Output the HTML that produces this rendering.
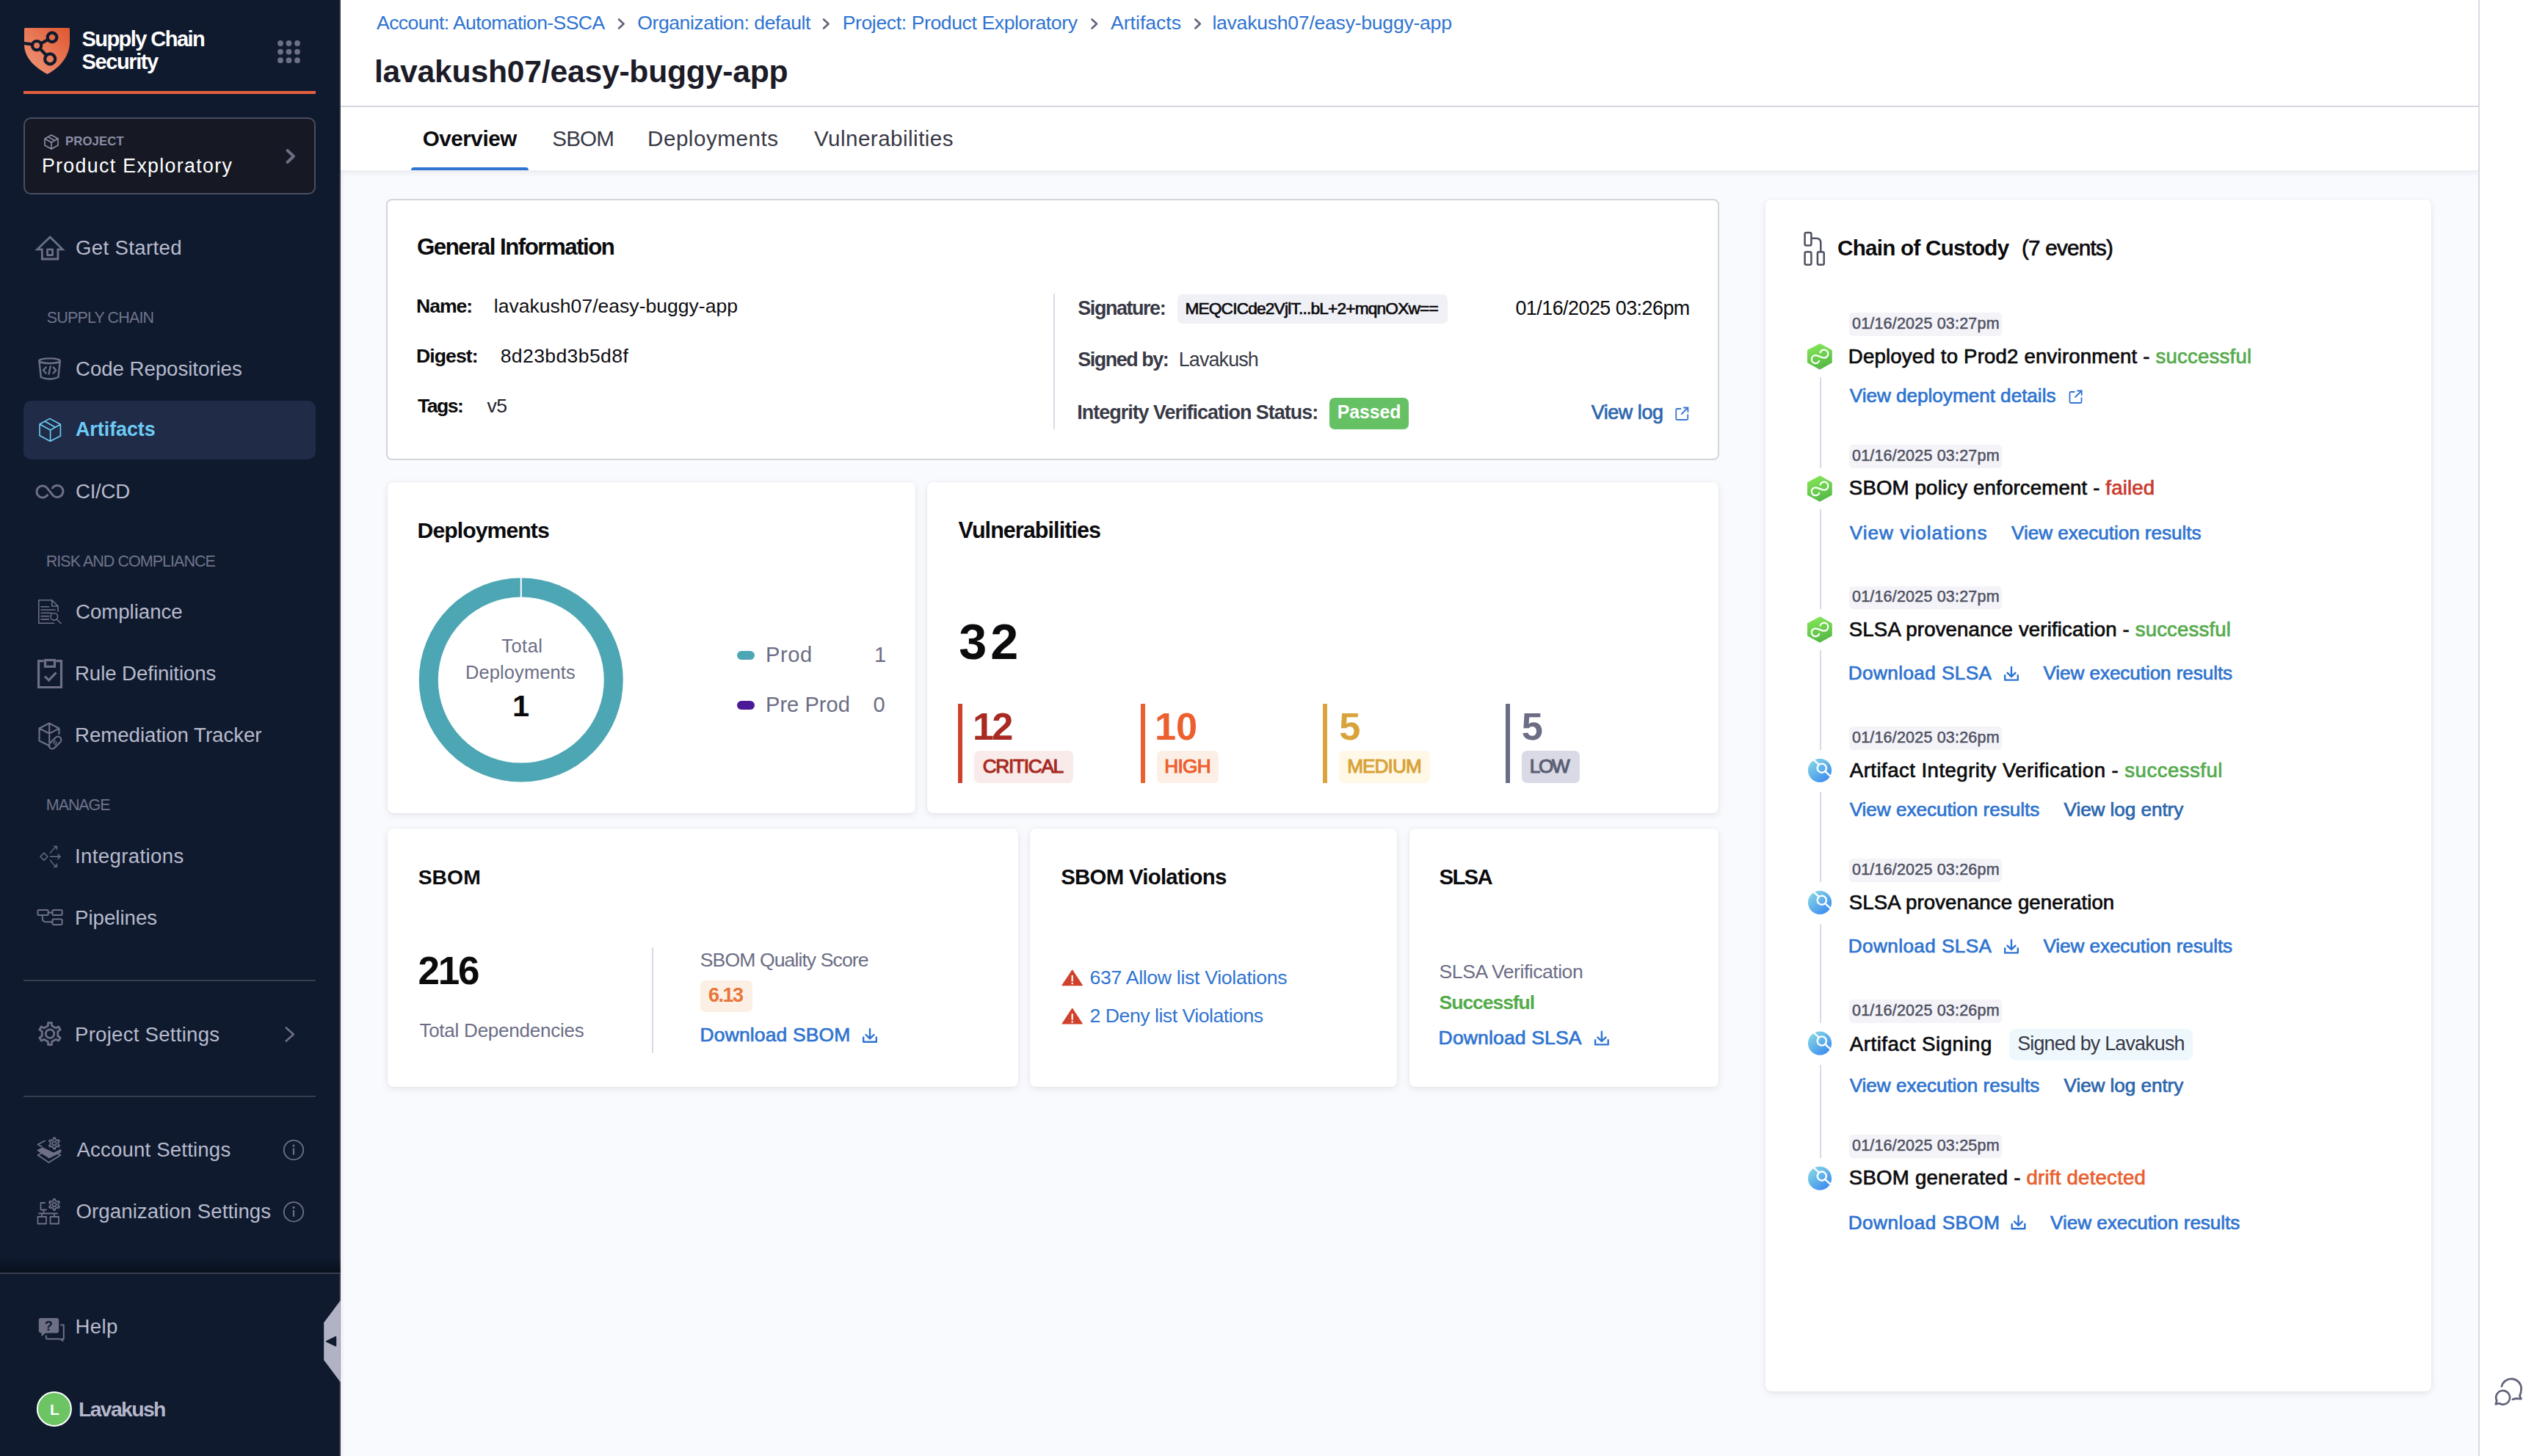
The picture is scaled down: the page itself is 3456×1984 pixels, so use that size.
<!DOCTYPE html>
<html><head><meta charset="utf-8"><title>lavakush07/easy-buggy-app</title>
<style>
html,body{margin:0;padding:0}
body{width:3456px;height:1984px;position:relative;overflow:hidden;background:#f9fafd;font-family:"Liberation Sans",sans-serif}
.t{position:absolute;white-space:nowrap}
</style></head><body>
<div style="position:absolute;left:0.00px;top:0.00px;width:464.00px;height:1984.00px;background:#0f1a2e"></div><div style="position:absolute;left:462.00px;top:0.00px;width:2.00px;height:1984.00px;background:#31333f"></div><div style="position:absolute;left:464.00px;top:0.00px;width:6.00px;height:1984.00px;background:linear-gradient(to right, rgba(40,41,61,0.05), rgba(40,41,61,0))"></div><div style="position:absolute;left:32.00px;top:124.00px;width:398.00px;height:4.00px;background:#e4603f"></div><div style="position:absolute;left:32.00px;top:160.00px;width:398.00px;height:105.00px;background:#161924;border:2px solid #4a4e62;border-radius:10px;box-sizing:border-box"></div><div style="position:absolute;left:32.00px;top:546.00px;width:398.00px;height:80.00px;background:#1f2b47;border-radius:10px"></div><div style="position:absolute;left:32.00px;top:1335.00px;width:398.00px;height:2.00px;background:#383d50"></div><div style="position:absolute;left:32.00px;top:1493.00px;width:398.00px;height:2.00px;background:#383d50"></div><div style="position:absolute;left:0.00px;top:1714.00px;width:464.00px;height:20.00px;background:linear-gradient(to bottom, rgba(5,8,16,0) 0%, rgba(5,8,16,0.6) 100%)"></div><div style="position:absolute;left:0.00px;top:1734.00px;width:464.00px;height:2.00px;background:#3b3f52"></div><div style="position:absolute;left:464.00px;top:0.00px;width:2913.00px;height:145.00px;background:#ffffff"></div><div style="position:absolute;left:464.00px;top:144.00px;width:2913.00px;height:2.00px;background:#d9dae5"></div><div style="position:absolute;left:464.00px;top:146.00px;width:2913.00px;height:86.00px;background:#ffffff;box-shadow:0 3px 8px rgba(40,41,61,0.08)"></div><div style="position:absolute;left:560.00px;top:228.00px;width:159.50px;height:4.00px;background:#2f74d0;border-radius:4px 4px 0 0"></div><div style="position:absolute;left:3376.00px;top:0.00px;width:2.00px;height:1984.00px;background:#d9dae5"></div><div style="position:absolute;left:3378.00px;top:0.00px;width:78.00px;height:1984.00px;background:#ffffff"></div><div style="position:absolute;left:526.00px;top:271.00px;width:1816.00px;height:356.00px;background:#fff;border:2px solid #d4d5db;border-radius:8px;box-sizing:border-box"></div><div style="position:absolute;left:528.00px;top:657.00px;width:719.00px;height:451.00px;background:#fff;border-radius:8px;box-shadow:0 0 3px rgba(40,41,61,0.06),0 3px 10px rgba(96,97,112,0.12)"></div><div style="position:absolute;left:1263.00px;top:657.00px;width:1078.00px;height:451.00px;background:#fff;border-radius:8px;box-shadow:0 0 3px rgba(40,41,61,0.06),0 3px 10px rgba(96,97,112,0.12)"></div><div style="position:absolute;left:528.00px;top:1129.00px;width:859.00px;height:352.00px;background:#fff;border-radius:8px;box-shadow:0 0 3px rgba(40,41,61,0.06),0 3px 10px rgba(96,97,112,0.12)"></div><div style="position:absolute;left:1403.00px;top:1129.00px;width:500.00px;height:352.00px;background:#fff;border-radius:8px;box-shadow:0 0 3px rgba(40,41,61,0.06),0 3px 10px rgba(96,97,112,0.12)"></div><div style="position:absolute;left:1919.50px;top:1129.00px;width:421.50px;height:352.00px;background:#fff;border-radius:8px;box-shadow:0 0 3px rgba(40,41,61,0.06),0 3px 10px rgba(96,97,112,0.12)"></div><div style="position:absolute;left:2405.00px;top:272.00px;width:907.00px;height:1624.00px;background:#fff;border-radius:8px;box-shadow:0 0 3px rgba(40,41,61,0.06),0 3px 10px rgba(96,97,112,0.12)"></div><div style="position:absolute;left:1435.00px;top:400.00px;width:2.00px;height:185.00px;background:#d9dae5"></div><div style="position:absolute;left:1604.00px;top:401.00px;width:368.00px;height:40.00px;background:#f0f0f7;border-radius:7px"></div><div style="position:absolute;left:1811.00px;top:542.00px;width:108.00px;height:43.00px;background:#66c164;border-radius:7px"></div><div style="position:absolute;left:1304.70px;top:959.40px;width:6.00px;height:107.20px;background:#d0402a"></div><div style="position:absolute;left:1327.40px;top:1023.30px;width:134.40px;height:43.30px;background:#f9ebea;border-radius:7px"></div><div style="position:absolute;left:1554.00px;top:959.40px;width:6.00px;height:107.20px;background:#ec5f2f"></div><div style="position:absolute;left:1576.00px;top:1023.30px;width:83.50px;height:43.30px;background:#fcefe6;border-radius:7px"></div><div style="position:absolute;left:1802.00px;top:959.40px;width:6.00px;height:107.20px;background:#d9a43a"></div><div style="position:absolute;left:1824.00px;top:1023.30px;width:123.80px;height:43.30px;background:#fff8e6;border-radius:7px"></div><div style="position:absolute;left:2050.70px;top:959.40px;width:6.00px;height:107.20px;background:#6b6d85"></div><div style="position:absolute;left:2073.00px;top:1023.30px;width:78.70px;height:43.30px;background:#d9dae5;border-radius:7px"></div><div style="position:absolute;left:888.00px;top:1291.00px;width:2.00px;height:143.50px;background:#d9dae5"></div><div style="position:absolute;left:954.00px;top:1335.60px;width:70.60px;height:43.40px;background:#fcefe3;border-radius:7px"></div><div style="position:absolute;left:1003.80px;top:886.70px;width:24.50px;height:12.50px;background:#4da6b4;border-radius:7px"></div><div style="position:absolute;left:1003.80px;top:954.70px;width:24.50px;height:12.50px;background:#4b1a96;border-radius:7px"></div><div style="position:absolute;left:2519.00px;top:426.20px;width:208.00px;height:31.60px;background:#f3f3f8;border-radius:5px"></div><div style="position:absolute;left:2519.00px;top:606.10px;width:208.00px;height:31.60px;background:#f3f3f8;border-radius:5px"></div><div style="position:absolute;left:2519.00px;top:798.50px;width:208.00px;height:31.60px;background:#f3f3f8;border-radius:5px"></div><div style="position:absolute;left:2519.00px;top:990.20px;width:208.00px;height:31.60px;background:#f3f3f8;border-radius:5px"></div><div style="position:absolute;left:2519.00px;top:1170.20px;width:208.00px;height:31.60px;background:#f3f3f8;border-radius:5px"></div><div style="position:absolute;left:2519.00px;top:1362.00px;width:208.00px;height:31.60px;background:#f3f3f8;border-radius:5px"></div><div style="position:absolute;left:2519.00px;top:1546.00px;width:208.00px;height:31.60px;background:#f3f3f8;border-radius:5px"></div><div style="position:absolute;left:2737.30px;top:1402.40px;width:249.50px;height:42.80px;background:#eef8fc;border-radius:9px"></div><div style="position:absolute;left:2479.00px;top:513.60px;width:2.00px;height:124.10px;background:#d9dae5"></div><div style="position:absolute;left:2479.00px;top:693.70px;width:2.00px;height:136.40px;background:#d9dae5"></div><div style="position:absolute;left:2479.00px;top:885.70px;width:2.00px;height:136.10px;background:#d9dae5"></div><div style="position:absolute;left:2479.00px;top:1079.10px;width:2.00px;height:122.70px;background:#d9dae5"></div><div style="position:absolute;left:2479.00px;top:1259.10px;width:2.00px;height:134.50px;background:#d9dae5"></div><div style="position:absolute;left:2479.00px;top:1450.90px;width:2.00px;height:126.70px;background:#d9dae5"></div>
<svg width="3456" height="1984" viewBox="0 0 3456 1984" style="position:absolute;left:0;top:0;pointer-events:none"><defs>
<linearGradient id="lg" x1="0" y1="1" x2="1" y2="0"><stop offset="0" stop-color="#f09a7e"/><stop offset="1" stop-color="#e0572f"/></linearGradient>
<linearGradient id="gg" x1="0" y1="0" x2="0.3" y2="1"><stop offset="0" stop-color="#88e957"/><stop offset="1" stop-color="#58bb48"/></linearGradient>
<linearGradient id="bg" x1="0.15" y1="0.1" x2="0.85" y2="0.95"><stop offset="0" stop-color="#84d4e6"/><stop offset="1" stop-color="#3a8af0"/></linearGradient>
</defs><path d="M33,39.5 Q33,38 34.5,38 L93.5,38 Q95,38 95,39.5 L95,57.5 C95,76 82,92 64.4,101 C47,92 33,78 33,60.8 Z" fill="url(#lg)"/><g fill="none" stroke="#0f1a2e" stroke-width="4.2"><circle cx="50.1" cy="62.1" r="6.1"/><circle cx="71" cy="50.9" r="6.3"/><circle cx="68.2" cy="80.4" r="7"/><path d="M28,58.5 L44.2,60.3 M55.6,59.3 L65.3,54 M54.6,66.4 L63,75.3"/></g><circle cx="382" cy="59" r="3.9" fill="#6d6f87"/><circle cx="382" cy="70.6" r="3.9" fill="#6d6f87"/><circle cx="382" cy="82.2" r="3.9" fill="#6d6f87"/><circle cx="393.5" cy="59" r="3.9" fill="#6d6f87"/><circle cx="393.5" cy="70.6" r="3.9" fill="#6d6f87"/><circle cx="393.5" cy="82.2" r="3.9" fill="#6d6f87"/><circle cx="405" cy="59" r="3.9" fill="#6d6f87"/><circle cx="405" cy="70.6" r="3.9" fill="#6d6f87"/><circle cx="405" cy="82.2" r="3.9" fill="#6d6f87"/><g fill="none" stroke="#8b8ea6" stroke-width="1.6" stroke-linejoin="round"><path d="M70,184 L79,189 V198 L70,203 L61,198 V189 Z M61,189 L70,194 L79,189 M70,194 V203 M65.5,186.5 L74.5,191.5"/></g><path d="M391.5,205 L400,213 L391.5,221" fill="none" stroke="#6d6f87" stroke-width="3.8" stroke-linecap="round" stroke-linejoin="round"/><g fill="none" stroke="#6d6f87" stroke-width="2.8" stroke-linejoin="round" stroke-linecap="round"><path d="M68.2,323 L50.8,339.8 H57.3 V353 H78.9 V339.8 H85.3 Z" stroke-linejoin="miter"/><rect x="64.5" y="339.8" width="7.1" height="7.8"/></g><g fill="none" stroke="#6d6f87" stroke-width="2.4" stroke-linejoin="round" stroke-linecap="round"><ellipse cx="67.6" cy="491.7" rx="14.2" ry="3.3"/><path d="M53.4,492 L55.8,514 Q67.6,519 79.4,514 L81.8,492"/><path d="M62.5,500.5 L59,504.5 L62.5,508.5 M72.7,500.5 L76.2,504.5 L72.7,508.5 M68.6,499.5 L66.6,509.5"/></g><g fill="none" stroke="#6ecbf5" stroke-width="1.6" stroke-linejoin="round" stroke-linecap="round"><path d="M67.8,570.4 L54,578 V593.5 L68.4,601.2 L82.4,594 V578.3 Z M54,578 L68.6,586 L82.4,578.3 M68.6,586 V601.2 M61.2,574.2 L75.4,582.2"/></g><g fill="none" stroke="#6d6f87" stroke-width="3.0" stroke-linejoin="round" stroke-linecap="round"><path d="M64.6,674.6 A8,8 0 1 1 63.6,664.4 L72.4,675.2 A8,8 0 1 0 71.4,665"/></g><g fill="none" stroke="#6d6f87" stroke-width="1.6" stroke-linejoin="round" stroke-linecap="round"><path d="M79,833 V826 L70.8,817.8 H52.8 V849.2 H73.5 M70.8,817.8 V826 H79 M56,826.8 H66.5 M56,831 H75 M56,835.3 H70 M56,839.6 H66.5 M56,843.9 H66.5"/><circle cx="73.8" cy="840.3" r="4.8"/><path d="M77.3,843.8 L83,849.5"/></g><g fill="none" stroke="#6d6f87" stroke-width="3.2" stroke-linejoin="round" stroke-linecap="round"><path d="M59.5,900.6 H52.6 V936.5 H83.5 V900.6 H76.4" stroke-linejoin="miter" stroke-linecap="butt"/><rect x="61.5" y="899.5" width="13" height="8.8" stroke-linejoin="miter"/><path d="M61,921.5 L66.4,927 L76.5,916.5" stroke-linecap="butt" stroke-linejoin="miter"/></g><g fill="none" stroke="#6d6f87" stroke-width="2.2" stroke-linejoin="round" stroke-linecap="round"><path d="M67,985.5 L53.5,992.5 V1009.5 L67.5,1016.3 M53.5,992.5 L67.2,999.6 L80.5,992.5 L67,985.5 M80.5,992.5 V1000 M67.2,987.5 V998.5 M67.2,1001.5 V1011.5"/><rect x="65" y="1007.5" width="20" height="9" rx="4.5" transform="rotate(-45 75 1012)"/><path d="M72.8,1012.6 l1,-1 M75,1014.6 l1,-1 M74,1010.4 l1,-1 M76.2,1012.4 l1,-1" stroke-width="1.5"/></g><g fill="none" stroke="#6d6f87" stroke-width="1.4" stroke-linejoin="round" stroke-linecap="round"><path d="M59.9,1162.2 L64.9,1167.2 L59.9,1172.2 L54.9,1167.2 Z M68.5,1167.2 H82 M79,1164.2 L82,1167.2 L79,1170.2 M68.5,1162.5 Q72,1156.5 77.5,1153.5 M73.6,1153.2 L77.5,1153.5 L77.3,1157.4 M68.5,1172 Q72,1178 77.5,1181 M77.3,1177.1 L77.5,1181 L73.6,1181.3"/></g><g fill="none" stroke="#6d6f87" stroke-width="2.0" stroke-linejoin="round" stroke-linecap="round"><rect x="51.4" y="1240" width="14.3" height="7" rx="1.8"/><rect x="71.4" y="1240" width="13.3" height="7" rx="1.8"/><rect x="71.4" y="1252.6" width="13.3" height="7.3" rx="1.8"/><path d="M65.7,1243.5 H71.4 M57.8,1247 V1251.5 Q57.8,1256.2 62.5,1256.2 H71.4"/></g><g fill="none" stroke="#6d6f87" stroke-width="2.8" stroke-linejoin="round" stroke-linecap="round"><path d="M65.39,1397.71 L65.62,1393.59 L70.38,1393.59 L70.61,1397.71 L76.12,1400.89 L79.81,1399.03 L82.19,1403.15 L78.74,1405.42 L78.74,1411.78 L82.19,1414.05 L79.81,1418.17 L76.12,1416.31 L70.61,1419.49 L70.38,1423.61 L65.62,1423.61 L65.39,1419.49 L59.88,1416.31 L56.19,1418.17 L53.81,1414.05 L57.26,1411.78 L57.26,1405.42 L53.81,1403.15 L56.19,1399.03 L59.88,1400.89 Z"/><circle cx="68" cy="1408.6" r="5.8"/></g><path d="M389.8,1400.5 L399.8,1409.5 L389.8,1418.5" fill="none" stroke="#6d6f87" stroke-width="2.6" stroke-linecap="round" stroke-linejoin="round"/><g fill="none" stroke="#6d6f87" stroke-width="1.8" stroke-linejoin="round" stroke-linecap="round"><path d="M61,1554.5 L51.5,1559.5 L57,1562.5"/><path d="M51.5,1567.5 L58,1564.3 L73,1571.5 L82.5,1567 L82.5,1569.8 L67,1577.5 Z" fill="#6d6f87"/><path d="M51.5,1574 L66.5,1584 L82.5,1574 L78,1571.8 M56,1571.8 L51.5,1574"/><path d="M72.69,1552.55 L72.81,1550.49 L75.19,1550.49 L75.31,1552.55 L78.06,1554.15 L79.91,1553.22 L81.10,1555.28 L79.37,1556.41 L79.37,1559.59 L81.10,1560.72 L79.91,1562.78 L78.06,1561.85 L75.31,1563.45 L75.19,1565.51 L72.81,1565.51 L72.69,1563.45 L69.94,1561.85 L68.09,1562.78 L66.90,1560.72 L68.63,1559.59 L68.63,1556.41 L66.90,1555.28 L68.09,1553.22 L69.94,1554.15 Z"/><circle cx="74" cy="1558" r="2.6"/></g><g fill="none" stroke="#6d6f87" stroke-width="1.8" stroke-linejoin="round" stroke-linecap="round"><path d="M72.69,1635.95 L72.81,1633.89 L75.19,1633.89 L75.31,1635.95 L78.06,1637.55 L79.91,1636.62 L81.10,1638.68 L79.37,1639.81 L79.37,1642.99 L81.10,1644.12 L79.91,1646.18 L78.06,1645.25 L75.31,1646.85 L75.19,1648.91 L72.81,1648.91 L72.69,1646.85 L69.94,1645.25 L68.09,1646.18 L66.90,1644.12 L68.63,1642.99 L68.63,1639.81 L66.90,1638.68 L68.09,1636.62 L69.94,1637.55 Z"/><circle cx="74" cy="1641.4" r="2.6"/><path d="M61,1639 H55.5 V1648.5 H63 M59.5,1648.5 V1653.5 M53,1653.5 H78 M57,1653.5 V1658 M74,1653.5 V1658"/><rect x="51.5" y="1658" width="11.5" height="9.5"/><rect x="68.5" y="1658" width="11.5" height="9.5"/></g><circle cx="400" cy="1567" r="13.2" fill="none" stroke="#6d6f87" stroke-width="1.8"/><circle cx="400" cy="1561" r="1.6" fill="#6d6f87"/><rect x="398.9" y="1564.5" width="2.2" height="9" fill="#6d6f87"/><circle cx="400" cy="1651.4" r="13.2" fill="none" stroke="#6d6f87" stroke-width="1.8"/><circle cx="400" cy="1645.4" r="1.6" fill="#6d6f87"/><rect x="398.9" y="1648.9" width="2.2" height="9" fill="#6d6f87"/><path d="M55.5,1796 H77 Q80.2,1796 80.2,1799.2 V1813.2 Q80.2,1816.4 77,1816.4 H62 L56.5,1821.3 V1816.4 Q52.8,1816.4 52.8,1813 V1799 Q52.8,1796 55.5,1796 Z" fill="#6d6f87"/><text x="66.3" y="1813.2" font-family="Liberation Sans" font-weight="700" font-size="18" fill="#0f1a2e" text-anchor="middle">?</text><g fill="none" stroke="#6d6f87" stroke-width="2.0" stroke-linejoin="round" stroke-linecap="round"><path d="M83.2,1805.5 H86.8 V1824.5 H84.5 L85.5,1827 L81.5,1824.5 H64.5 Q62.8,1824.5 62.8,1822.8 V1820.2"/></g><path d="M463.8,1772 L441.2,1802.3 L441.2,1853.3 L463.8,1883.6 Z" fill="#b1b2c4"/><path d="M444.5,1827.8 L457.5,1821.5 L457.5,1834 Z" fill="#0f1a2e" stroke="#0f1a2e" stroke-width="1.5" stroke-linejoin="round"/><circle cx="73.9" cy="1920" r="23" fill="#6cc463" stroke="#ffffff" stroke-width="2"/><text x="74.5" y="1927.8" font-family="Liberation Sans" font-weight="700" font-size="21" fill="#fff" text-anchor="middle">L</text><circle cx="709.8" cy="926.6" r="126" fill="none" stroke="#4da6b4" stroke-width="26"/><rect x="708.8" y="786" width="2" height="28" fill="#fff"/><g fill="none" stroke="#3a78d0" stroke-width="1.8" stroke-linejoin="round" stroke-linecap="round"><path d="M2290.2,557.0 H2284.7 Q2283.2,557.0 2283.2,558.5 V570.5 Q2283.2,572.0 2284.7,572.0 H2297.7 Q2299.2,572.0 2299.2,570.5 V564.5" stroke-linecap="butt"/><path d="M2290.7,564.0 L2299.4,555.5 M2293.7,555.5 H2299.4 V561.3"/></g><g fill="none" stroke="#2f74d0" stroke-width="1.8" stroke-linejoin="round" stroke-linecap="round"><path d="M2826.5,534.0 H2821.0 Q2819.5,534.0 2819.5,535.5 V547.5 Q2819.5,549.0 2821.0,549.0 H2834.0 Q2835.5,549.0 2835.5,547.5 V541.5" stroke-linecap="butt"/><path d="M2827.0,541.0 L2835.7,532.5 M2830.0,532.5 H2835.7 V538.3"/></g><g fill="none" stroke="#2f74d0" stroke-width="2.4" stroke-linejoin="round" stroke-linecap="round"><path d="M1185.0,1402.2 V1415.0 M1179.5,1410.0 L1185.0,1415.3 L1190.5,1410.0 M1176.2,1413.5 V1419.8 H1193.8 V1413.5" /></g><g fill="none" stroke="#2f74d0" stroke-width="2.4" stroke-linejoin="round" stroke-linecap="round"><path d="M2181.9,1405.8 V1418.6 M2176.4,1413.6 L2181.9,1418.9 L2187.4,1413.6 M2173.1,1417.1 V1423.4 H2190.7 V1417.1" /></g><g fill="none" stroke="#2f74d0" stroke-width="2.4" stroke-linejoin="round" stroke-linecap="round"><path d="M2740.0,909.0 V921.8 M2734.5,916.8 L2740.0,922.1 L2745.5,916.8 M2731.2,920.3 V926.6 H2748.8 V920.3" /></g><g fill="none" stroke="#2f74d0" stroke-width="2.4" stroke-linejoin="round" stroke-linecap="round"><path d="M2740.0,1280.8 V1293.6 M2734.5,1288.6 L2740.0,1293.9 L2745.5,1288.6 M2731.2,1292.1 V1298.4 H2748.8 V1292.1" /></g><g fill="none" stroke="#2f74d0" stroke-width="2.4" stroke-linejoin="round" stroke-linecap="round"><path d="M2749.5,1656.7 V1669.5 M2744.0,1664.5 L2749.5,1669.8 L2755.0,1664.5 M2740.7,1668.0 V1674.3 H2758.3 V1668.0" /></g><path d="M1460.7,1322.0 L1474.3,1342.6 H1447.1 Z" fill="#d0402a" stroke="#d0402a" stroke-width="1.2" stroke-linejoin="round"/><rect x="1459.6" y="1328.9" width="2.2" height="8.5" fill="#fff"/><rect x="1459.6" y="1338.9" width="2.2" height="2.3" fill="#fff"/><path d="M1460.7,1374.4 L1474.3,1395.0 H1447.1 Z" fill="#d0402a" stroke="#d0402a" stroke-width="1.2" stroke-linejoin="round"/><rect x="1459.6" y="1381.3" width="2.2" height="8.5" fill="#fff"/><rect x="1459.6" y="1391.3" width="2.2" height="2.3" fill="#fff"/><g fill="none" stroke="#4f5162" stroke-width="2.5" stroke-linejoin="round" stroke-linecap="round"><rect x="2458.6" y="317" width="8.8" height="17.5" rx="2"/><rect x="2458.6" y="343.2" width="8.8" height="17.5" rx="2"/><rect x="2475.9" y="343.2" width="8.8" height="17.5" rx="2"/><path d="M2467.4,324.8 H2474 Q2480.3,324.8 2480.3,331 V343.2"/></g><path d="M2479.3,468.9 L2495,477.7 V493.9 L2479,502.8 L2462.7,493.9 V477.5 Z" fill="url(#gg)" stroke="url(#gg)" stroke-width="1.5" stroke-linejoin="round"/><path d="M2479.4,481.2 A5.5,5.5 0 1 1 2484.9,487.6 C2481.5,487.6 2477,484.2 2473.2,484.2 A5.4,5.4 0 1 0 2478.4,491.0" fill="none" stroke="#fff" stroke-width="2.3" stroke-linecap="butt"/><path d="M2479.3,649.0 L2495,657.8 V674.0 L2479,682.9 L2462.7,674.0 V657.6 Z" fill="url(#gg)" stroke="url(#gg)" stroke-width="1.5" stroke-linejoin="round"/><path d="M2479.4,661.3 A5.5,5.5 0 1 1 2484.9,667.7 C2481.5,667.7 2477,664.3 2473.2,664.3 A5.4,5.4 0 1 0 2478.4,671.1" fill="none" stroke="#fff" stroke-width="2.3" stroke-linecap="butt"/><path d="M2479.3,841.0 L2495,849.8 V866.0 L2479,874.9 L2462.7,866.0 V849.6 Z" fill="url(#gg)" stroke="url(#gg)" stroke-width="1.5" stroke-linejoin="round"/><path d="M2479.4,853.3 A5.5,5.5 0 1 1 2484.9,859.7 C2481.5,859.7 2477,856.3 2473.2,856.3 A5.4,5.4 0 1 0 2478.4,863.1" fill="none" stroke="#fff" stroke-width="2.3" stroke-linecap="butt"/><circle cx="2479" cy="1049.8" r="16.1" fill="url(#bg)"/><circle cx="2481.8" cy="1046.7" r="6.1" fill="none" stroke="#fff" stroke-width="2.4"/><path d="M2469.5,1034.3 L2477.3,1041.3 M2486.3,1051.2 L2494,1058.1" stroke="#fff" stroke-width="2.4"/><circle cx="2479" cy="1229.8" r="16.1" fill="url(#bg)"/><circle cx="2481.8" cy="1226.7" r="6.1" fill="none" stroke="#fff" stroke-width="2.4"/><path d="M2469.5,1214.3 L2477.3,1221.3 M2486.3,1231.2 L2494,1238.1" stroke="#fff" stroke-width="2.4"/><circle cx="2479" cy="1421.6" r="16.1" fill="url(#bg)"/><circle cx="2481.8" cy="1418.5" r="6.1" fill="none" stroke="#fff" stroke-width="2.4"/><path d="M2469.5,1406.1 L2477.3,1413.1 M2486.3,1423.0 L2494,1429.9" stroke="#fff" stroke-width="2.4"/><circle cx="2479" cy="1605.7" r="16.1" fill="url(#bg)"/><circle cx="2481.8" cy="1602.6" r="6.1" fill="none" stroke="#fff" stroke-width="2.4"/><path d="M2469.5,1590.2 L2477.3,1597.2 M2486.3,1607.1 L2494,1614.0" stroke="#fff" stroke-width="2.4"/><path d="M843.1,26.5 L849.6,32.5 L843.1,38.5" fill="none" stroke="#5f6478" stroke-width="2.6" stroke-linecap="round" stroke-linejoin="round"/><path d="M1122.1,26.5 L1128.6,32.5 L1122.1,38.5" fill="none" stroke="#5f6478" stroke-width="2.6" stroke-linecap="round" stroke-linejoin="round"/><path d="M1487.5,26.5 L1494.0,32.5 L1487.5,38.5" fill="none" stroke="#5f6478" stroke-width="2.6" stroke-linecap="round" stroke-linejoin="round"/><path d="M1628.3,26.5 L1634.8,32.5 L1628.3,38.5" fill="none" stroke="#5f6478" stroke-width="2.6" stroke-linecap="round" stroke-linejoin="round"/><g fill="none" stroke="#5f6279" stroke-width="2.7" stroke-linejoin="round" stroke-linecap="round"><path d="M3407.8,1889.2 A13.6,13.6 0 0 1 3434.6,1891.8 Q3434.6,1898 3432.4,1902 L3434.4,1906.2 L3427.6,1905.6 Q3425.4,1906 3422.8,1906.9"/><path d="M3401.2,1908.6 A9.4,9.4 0 1 1 3404.4,1912.2 L3399.8,1913.4 Z"/></g></svg>
<div class="t" style="left:111.50px;top:38.94px;font-size:29.07px;line-height:29.07px;font-weight:700;color:#ffffff;letter-spacing:-1.591px">Supply Chain</div><div class="t" style="left:111.50px;top:70.44px;font-size:29.07px;line-height:29.07px;font-weight:700;color:#ffffff;letter-spacing:-1.429px">Security</div><div class="t" style="left:89.00px;top:184.88px;font-size:16.72px;line-height:16.72px;font-weight:700;color:#8b8ea6;letter-spacing:0.133px">PROJECT</div><div class="t" style="left:56.90px;top:212.90px;font-size:26.74px;line-height:26.74px;font-weight:400;color:#ffffff;letter-spacing:1.344px">Product Exploratory</div><div class="t" style="left:103.00px;top:323.66px;font-size:27.62px;line-height:27.62px;font-weight:400;color:#b8bacd;letter-spacing:0.340px">Get Started</div><div class="t" style="left:63.80px;top:422.82px;font-size:21.51px;line-height:21.51px;font-weight:400;color:#70738c;letter-spacing:-0.864px">SUPPLY CHAIN</div><div class="t" style="left:103.00px;top:488.56px;font-size:27.62px;line-height:27.62px;font-weight:400;color:#b8bacd;letter-spacing:-0.025px">Code Repositories</div><div class="t" style="left:103.00px;top:572.28px;font-size:26.89px;line-height:26.89px;font-weight:700;color:#6ecbf5;letter-spacing:-0.037px">Artifacts</div><div class="t" style="left:103.00px;top:656.26px;font-size:27.62px;line-height:27.62px;font-weight:400;color:#b8bacd;letter-spacing:-0.250px">CI/CD</div><div class="t" style="left:62.80px;top:755.32px;font-size:21.51px;line-height:21.51px;font-weight:400;color:#70738c;letter-spacing:-0.967px">RISK AND COMPLIANCE</div><div class="t" style="left:103.00px;top:819.66px;font-size:27.62px;line-height:27.62px;font-weight:400;color:#b8bacd;letter-spacing:-0.011px">Compliance</div><div class="t" style="left:102.00px;top:904.06px;font-size:27.62px;line-height:27.62px;font-weight:400;color:#b8bacd;letter-spacing:-0.067px">Rule Definitions</div><div class="t" style="left:102.00px;top:988.36px;font-size:27.62px;line-height:27.62px;font-weight:400;color:#b8bacd;letter-spacing:-0.011px">Remediation Tracker</div><div class="t" style="left:62.80px;top:1086.82px;font-size:21.51px;line-height:21.51px;font-weight:400;color:#70738c;letter-spacing:-1.080px">MANAGE</div><div class="t" style="left:102.00px;top:1153.46px;font-size:27.62px;line-height:27.62px;font-weight:400;color:#b8bacd;letter-spacing:0.364px">Integrations</div><div class="t" style="left:102.00px;top:1237.26px;font-size:27.62px;line-height:27.62px;font-weight:400;color:#b8bacd;letter-spacing:0.000px">Pipelines</div><div class="t" style="left:102.00px;top:1395.96px;font-size:27.62px;line-height:27.62px;font-weight:400;color:#b8bacd;letter-spacing:0.247px">Project Settings</div><div class="t" style="left:104.50px;top:1553.36px;font-size:27.62px;line-height:27.62px;font-weight:400;color:#b8bacd;letter-spacing:0.167px">Account Settings</div><div class="t" style="left:103.50px;top:1636.66px;font-size:27.62px;line-height:27.62px;font-weight:400;color:#b8bacd;letter-spacing:0.080px">Organization Settings</div><div class="t" style="left:102.50px;top:1793.66px;font-size:27.62px;line-height:27.62px;font-weight:400;color:#b8bacd;letter-spacing:0.333px">Help</div><div class="t" style="left:107.00px;top:1905.65px;font-size:28.34px;line-height:28.34px;font-weight:700;color:#b5b7ca;letter-spacing:-1.614px">Lavakush</div><div class="t" style="left:513.00px;top:17.92px;font-size:26.60px;line-height:26.60px;font-weight:400;color:#2f74d0;letter-spacing:-0.609px">Account: Automation-SSCA</div><div class="t" style="left:868.30px;top:17.92px;font-size:26.60px;line-height:26.60px;font-weight:400;color:#2f74d0;letter-spacing:-0.465px">Organization: default</div><div class="t" style="left:1147.70px;top:17.92px;font-size:26.60px;line-height:26.60px;font-weight:400;color:#2f74d0;letter-spacing:-0.400px">Project: Product Exploratory</div><div class="t" style="left:1513.00px;top:17.92px;font-size:26.60px;line-height:26.60px;font-weight:400;color:#2f74d0;letter-spacing:0.000px">Artifacts</div><div class="t" style="left:1651.40px;top:17.92px;font-size:26.60px;line-height:26.60px;font-weight:400;color:#2f74d0;letter-spacing:-0.254px">lavakush07/easy-buggy-app</div><div class="t" style="left:510.00px;top:75.89px;font-size:42.73px;line-height:42.73px;font-weight:700;color:#1c1c28;letter-spacing:-0.258px">lavakush07/easy-buggy-app</div><div class="t" style="left:575.70px;top:174.24px;font-size:29.65px;line-height:29.65px;font-weight:700;color:#0b0b0d;letter-spacing:-0.471px">Overview</div><div class="t" style="left:752.30px;top:174.24px;font-size:29.65px;line-height:29.65px;font-weight:400;color:#383946;letter-spacing:-0.900px">SBOM</div><div class="t" style="left:882.00px;top:174.24px;font-size:29.65px;line-height:29.65px;font-weight:400;color:#383946;letter-spacing:0.500px">Deployments</div><div class="t" style="left:1108.90px;top:174.34px;font-size:29.65px;line-height:29.65px;font-weight:400;color:#383946;letter-spacing:0.450px">Vulnerabilities</div><div class="t" style="left:568.00px;top:320.79px;font-size:31.25px;line-height:31.25px;font-weight:700;color:#0b0b0d;letter-spacing:-1.500px">General Information</div><div class="t" style="left:567.00px;top:403.82px;font-size:26.60px;line-height:26.60px;font-weight:700;color:#0b0b0d;letter-spacing:-1.025px">Name:</div><div class="t" style="left:672.80px;top:403.82px;font-size:26.60px;line-height:26.60px;font-weight:400;color:#0e0e12;letter-spacing:-0.017px">lavakush07/easy-buggy-app</div><div class="t" style="left:567.00px;top:471.92px;font-size:26.60px;line-height:26.60px;font-weight:700;color:#0b0b0d;letter-spacing:-0.917px">Digest:</div><div class="t" style="left:681.70px;top:471.92px;font-size:26.60px;line-height:26.60px;font-weight:400;color:#0e0e12;letter-spacing:0.364px">8d23bd3b5d8f</div><div class="t" style="left:569.00px;top:540.02px;font-size:26.60px;line-height:26.60px;font-weight:700;color:#0b0b0d;letter-spacing:-1.550px">Tags:</div><div class="t" style="left:663.40px;top:540.02px;font-size:26.60px;line-height:26.60px;font-weight:400;color:#22222a;letter-spacing:-0.400px">v5</div><div class="t" style="left:1468.30px;top:406.98px;font-size:26.89px;line-height:26.89px;font-weight:700;color:#383946;letter-spacing:-1.400px">Signature:</div><div class="t" style="left:1614.40px;top:409.44px;font-size:22.67px;line-height:22.67px;font-weight:400;color:#0b0b0d;letter-spacing:-0.800px;-webkit-text-stroke:0.7px currentColor">MEQCICde2VjlT...bL+2+mqnOXw==</div><div class="t" style="left:2064.40px;top:406.98px;font-size:26.89px;line-height:26.89px;font-weight:400;color:#0b0b0d;letter-spacing:-0.512px">01/16/2025 03:26pm</div><div class="t" style="left:1468.30px;top:476.68px;font-size:26.89px;line-height:26.89px;font-weight:700;color:#383946;letter-spacing:-1.433px">Signed by:</div><div class="t" style="left:1605.80px;top:476.68px;font-size:26.89px;line-height:26.89px;font-weight:400;color:#383946;letter-spacing:-0.871px">Lavakush</div><div class="t" style="left:1467.30px;top:548.88px;font-size:26.89px;line-height:26.89px;font-weight:700;color:#383946;letter-spacing:-0.969px">Integrity Verification Status:</div><div class="t" style="left:1821.80px;top:549.90px;font-size:24.85px;line-height:24.85px;font-weight:700;color:#ffffff;letter-spacing:-0.060px">Passed</div><div class="t" style="left:2167.70px;top:548.88px;font-size:26.89px;line-height:26.89px;font-weight:400;color:#2c66ad;letter-spacing:-0.414px;-webkit-text-stroke:0.7px currentColor">View log</div><div class="t" style="left:568.60px;top:707.65px;font-size:30.23px;line-height:30.23px;font-weight:700;color:#0b0b0d;letter-spacing:-0.960px">Deployments</div><div class="t" style="left:683.30px;top:867.51px;font-size:25.44px;line-height:25.44px;font-weight:400;color:#6b6d85;letter-spacing:0.475px">Total</div><div class="t" style="left:634.00px;top:903.91px;font-size:25.44px;line-height:25.44px;font-weight:400;color:#6b6d85;letter-spacing:0.130px">Deployments</div><div class="t" style="left:698.00px;top:941.47px;font-size:41.57px;line-height:41.57px;font-weight:700;color:#0b0b0d;letter-spacing:0.000px">1</div><div class="t" style="left:1043.00px;top:877.94px;font-size:29.07px;line-height:29.07px;font-weight:400;color:#6b6d85;letter-spacing:0.567px">Prod</div><div class="t" style="left:1191.00px;top:877.94px;font-size:29.07px;line-height:29.07px;font-weight:400;color:#6b6d85;letter-spacing:0.000px">1</div><div class="t" style="left:1043.00px;top:946.34px;font-size:29.07px;line-height:29.07px;font-weight:400;color:#6b6d85;letter-spacing:0.029px">Pre Prod</div><div class="t" style="left:1189.60px;top:946.34px;font-size:29.07px;line-height:29.07px;font-weight:400;color:#6b6d85;letter-spacing:0.000px">0</div><div class="t" style="left:1305.60px;top:707.41px;font-size:30.52px;line-height:30.52px;font-weight:700;color:#0b0b0d;letter-spacing:-0.936px">Vulnerabilities</div><div class="t" style="left:1306.20px;top:840.37px;font-size:68.31px;line-height:68.31px;font-weight:700;color:#0b0b0d;letter-spacing:5.100px">32</div><div class="t" style="left:1324.90px;top:963.98px;font-size:52.33px;line-height:52.33px;font-weight:700;color:#a82a22;letter-spacing:-2.700px">12</div><div class="t" style="left:1338.70px;top:1031.39px;font-size:26.16px;line-height:26.16px;font-weight:400;color:#a82a22;letter-spacing:-1.243px;-webkit-text-stroke:1.1px currentColor">CRITICAL</div><div class="t" style="left:1573.00px;top:963.98px;font-size:52.33px;line-height:52.33px;font-weight:700;color:#ec5f2f;letter-spacing:-0.100px">10</div><div class="t" style="left:1586.20px;top:1031.39px;font-size:26.16px;line-height:26.16px;font-weight:400;color:#ec5f2f;letter-spacing:-0.633px;-webkit-text-stroke:1.1px currentColor">HIGH</div><div class="t" style="left:1824.20px;top:963.98px;font-size:52.33px;line-height:52.33px;font-weight:700;color:#d9a33b;letter-spacing:0.000px">5</div><div class="t" style="left:1835.20px;top:1031.39px;font-size:26.16px;line-height:26.16px;font-weight:400;color:#d9a33b;letter-spacing:-0.900px;-webkit-text-stroke:1.1px currentColor">MEDIUM</div><div class="t" style="left:2072.70px;top:963.98px;font-size:52.33px;line-height:52.33px;font-weight:700;color:#6b6d85;letter-spacing:0.000px">5</div><div class="t" style="left:2083.70px;top:1031.39px;font-size:26.16px;line-height:26.16px;font-weight:400;color:#5b5e73;letter-spacing:-2.350px;-webkit-text-stroke:1.1px currentColor">LOW</div><div class="t" style="left:569.70px;top:1180.75px;font-size:28.34px;line-height:28.34px;font-weight:700;color:#0b0b0d;letter-spacing:0.033px">SBOM</div><div class="t" style="left:569.40px;top:1295.67px;font-size:53.05px;line-height:53.05px;font-weight:700;color:#0b0b0d;letter-spacing:-2.200px">216</div><div class="t" style="left:571.40px;top:1390.72px;font-size:26.02px;line-height:26.02px;font-weight:400;color:#6b6d85;letter-spacing:-0.247px">Total Dependencies</div><div class="t" style="left:953.80px;top:1295.22px;font-size:26.60px;line-height:26.60px;font-weight:400;color:#6b6d85;letter-spacing:-0.918px">SBOM Quality Score</div><div class="t" style="left:965.00px;top:1342.56px;font-size:27.03px;line-height:27.03px;font-weight:700;color:#e8753a;letter-spacing:-1.533px">6.13</div><div class="t" style="left:953.50px;top:1396.85px;font-size:26.45px;line-height:26.45px;font-weight:400;color:#2f74d0;letter-spacing:0.175px;-webkit-text-stroke:0.7px currentColor">Download SBOM</div><div class="t" style="left:1445.20px;top:1179.99px;font-size:29.36px;line-height:29.36px;font-weight:700;color:#0b0b0d;letter-spacing:-0.707px">SBOM Violations</div><div class="t" style="left:1484.60px;top:1318.82px;font-size:26.60px;line-height:26.60px;font-weight:400;color:#2f74d0;letter-spacing:-0.296px">637 Allow list Violations</div><div class="t" style="left:1484.60px;top:1370.82px;font-size:26.60px;line-height:26.60px;font-weight:400;color:#2f74d0;letter-spacing:-0.471px">2 Deny list Violations</div><div class="t" style="left:1960.60px;top:1179.99px;font-size:29.36px;line-height:29.36px;font-weight:700;color:#0b0b0d;letter-spacing:-1.767px">SLSA</div><div class="t" style="left:1960.60px;top:1311.22px;font-size:26.60px;line-height:26.60px;font-weight:400;color:#6b6d85;letter-spacing:-0.494px">SLSA Verification</div><div class="t" style="left:1960.60px;top:1352.52px;font-size:26.60px;line-height:26.60px;font-weight:700;color:#52ab48;letter-spacing:-1.100px">Successful</div><div class="t" style="left:1959.60px;top:1401.02px;font-size:26.60px;line-height:26.60px;font-weight:400;color:#2f74d0;letter-spacing:0.108px;-webkit-text-stroke:0.7px currentColor">Download SLSA</div><div class="t" style="left:2503.00px;top:323.14px;font-size:29.65px;line-height:29.65px;font-weight:700;color:#0b0b0d;letter-spacing:-0.747px">Chain of Custody</div><div class="t" style="left:2754.00px;top:323.14px;font-size:29.65px;line-height:29.65px;font-weight:400;color:#0b0b0d;letter-spacing:-0.756px;-webkit-text-stroke:0.7px currentColor">(7 events)</div><div class="t" style="left:2523.00px;top:431.02px;font-size:21.51px;line-height:21.51px;font-weight:400;color:#4f5162;letter-spacing:0.194px;-webkit-text-stroke:0.5px currentColor">01/16/2025 03:27pm</div><div class="t" style="left:2517.80px;top:471.66px;font-size:27.62px;line-height:27.62px;font-weight:400;color:#0b0b0d;letter-spacing:0.185px;-webkit-text-stroke:0.7px currentColor">Deployed to Prod2 environment - <span style="color:#55ab4c">successful</span></div><div class="t" style="left:2519.80px;top:526.29px;font-size:26.16px;line-height:26.16px;font-weight:400;color:#2f74d0;letter-spacing:-0.041px;-webkit-text-stroke:0.7px currentColor">View deployment details</div><div class="t" style="left:2523.00px;top:610.92px;font-size:21.51px;line-height:21.51px;font-weight:400;color:#4f5162;letter-spacing:0.194px;-webkit-text-stroke:0.5px currentColor">01/16/2025 03:27pm</div><div class="t" style="left:2518.80px;top:651.46px;font-size:27.62px;line-height:27.62px;font-weight:400;color:#0b0b0d;letter-spacing:0.165px;-webkit-text-stroke:0.7px currentColor">SBOM policy enforcement - <span style="color:#c93a2c">failed</span></div><div class="t" style="left:2519.70px;top:712.59px;font-size:26.16px;line-height:26.16px;font-weight:400;color:#2f74d0;letter-spacing:1.021px;-webkit-text-stroke:0.7px currentColor">View violations</div><div class="t" style="left:2740.00px;top:712.59px;font-size:26.16px;line-height:26.16px;font-weight:400;color:#2f74d0;letter-spacing:-0.057px;-webkit-text-stroke:0.7px currentColor">View execution results</div><div class="t" style="left:2523.00px;top:803.32px;font-size:21.51px;line-height:21.51px;font-weight:400;color:#4f5162;letter-spacing:0.194px;-webkit-text-stroke:0.5px currentColor">01/16/2025 03:27pm</div><div class="t" style="left:2518.80px;top:843.86px;font-size:27.62px;line-height:27.62px;font-weight:400;color:#0b0b0d;letter-spacing:0.150px;-webkit-text-stroke:0.7px currentColor">SLSA provenance verification - <span style="color:#55ab4c">successful</span></div><div class="t" style="left:2517.70px;top:904.39px;font-size:26.16px;line-height:26.16px;font-weight:400;color:#2f74d0;letter-spacing:0.408px;-webkit-text-stroke:0.7px currentColor">Download SLSA</div><div class="t" style="left:2783.50px;top:904.39px;font-size:26.16px;line-height:26.16px;font-weight:400;color:#2f74d0;letter-spacing:-0.100px;-webkit-text-stroke:0.7px currentColor">View execution results</div><div class="t" style="left:2523.00px;top:995.02px;font-size:21.51px;line-height:21.51px;font-weight:400;color:#4f5162;letter-spacing:0.194px;-webkit-text-stroke:0.5px currentColor">01/16/2025 03:26pm</div><div class="t" style="left:2519.80px;top:1035.66px;font-size:27.62px;line-height:27.62px;font-weight:400;color:#0b0b0d;letter-spacing:0.456px;-webkit-text-stroke:0.7px currentColor">Artifact Integrity Verification - <span style="color:#55ab4c">successful</span></div><div class="t" style="left:2519.70px;top:1089.69px;font-size:26.16px;line-height:26.16px;font-weight:400;color:#2f74d0;letter-spacing:-0.057px;-webkit-text-stroke:0.7px currentColor">View execution results</div><div class="t" style="left:2811.50px;top:1089.69px;font-size:26.16px;line-height:26.16px;font-weight:400;color:#2c66ad;letter-spacing:-0.077px;-webkit-text-stroke:0.7px currentColor">View log entry</div><div class="t" style="left:2523.00px;top:1175.02px;font-size:21.51px;line-height:21.51px;font-weight:400;color:#4f5162;letter-spacing:0.194px;-webkit-text-stroke:0.5px currentColor">01/16/2025 03:26pm</div><div class="t" style="left:2518.80px;top:1216.16px;font-size:27.62px;line-height:27.62px;font-weight:400;color:#0b0b0d;letter-spacing:0.088px;-webkit-text-stroke:0.7px currentColor">SLSA provenance generation</div><div class="t" style="left:2517.70px;top:1276.19px;font-size:26.16px;line-height:26.16px;font-weight:400;color:#2f74d0;letter-spacing:0.408px;-webkit-text-stroke:0.7px currentColor">Download SLSA</div><div class="t" style="left:2783.50px;top:1276.19px;font-size:26.16px;line-height:26.16px;font-weight:400;color:#2f74d0;letter-spacing:-0.100px;-webkit-text-stroke:0.7px currentColor">View execution results</div><div class="t" style="left:2523.00px;top:1366.82px;font-size:21.51px;line-height:21.51px;font-weight:400;color:#4f5162;letter-spacing:0.194px;-webkit-text-stroke:0.5px currentColor">01/16/2025 03:26pm</div><div class="t" style="left:2519.80px;top:1409.26px;font-size:27.62px;line-height:27.62px;font-weight:400;color:#0b0b0d;letter-spacing:0.520px;-webkit-text-stroke:0.7px currentColor">Artifact Signing</div><div class="t" style="left:2519.70px;top:1466.49px;font-size:26.16px;line-height:26.16px;font-weight:400;color:#2f74d0;letter-spacing:-0.057px;-webkit-text-stroke:0.7px currentColor">View execution results</div><div class="t" style="left:2811.50px;top:1466.49px;font-size:26.16px;line-height:26.16px;font-weight:400;color:#2c66ad;letter-spacing:-0.077px;-webkit-text-stroke:0.7px currentColor">View log entry</div><div class="t" style="left:2523.00px;top:1550.82px;font-size:21.51px;line-height:21.51px;font-weight:400;color:#4f5162;letter-spacing:0.194px;-webkit-text-stroke:0.5px currentColor">01/16/2025 03:25pm</div><div class="t" style="left:2518.80px;top:1591.46px;font-size:27.62px;line-height:27.62px;font-weight:400;color:#0b0b0d;letter-spacing:0.223px;-webkit-text-stroke:0.7px currentColor">SBOM generated - <span style="color:#e8602e">drift detected</span></div><div class="t" style="left:2517.70px;top:1652.59px;font-size:26.16px;line-height:26.16px;font-weight:400;color:#2f74d0;letter-spacing:0.483px;-webkit-text-stroke:0.7px currentColor">Download SBOM</div><div class="t" style="left:2793.10px;top:1652.59px;font-size:26.16px;line-height:26.16px;font-weight:400;color:#2f74d0;letter-spacing:-0.071px;-webkit-text-stroke:0.7px currentColor">View execution results</div><div class="t" style="left:2748.20px;top:1409.28px;font-size:26.89px;line-height:26.89px;font-weight:400;color:#383946;letter-spacing:-0.806px">Signed by Lavakush</div>
</body></html>
